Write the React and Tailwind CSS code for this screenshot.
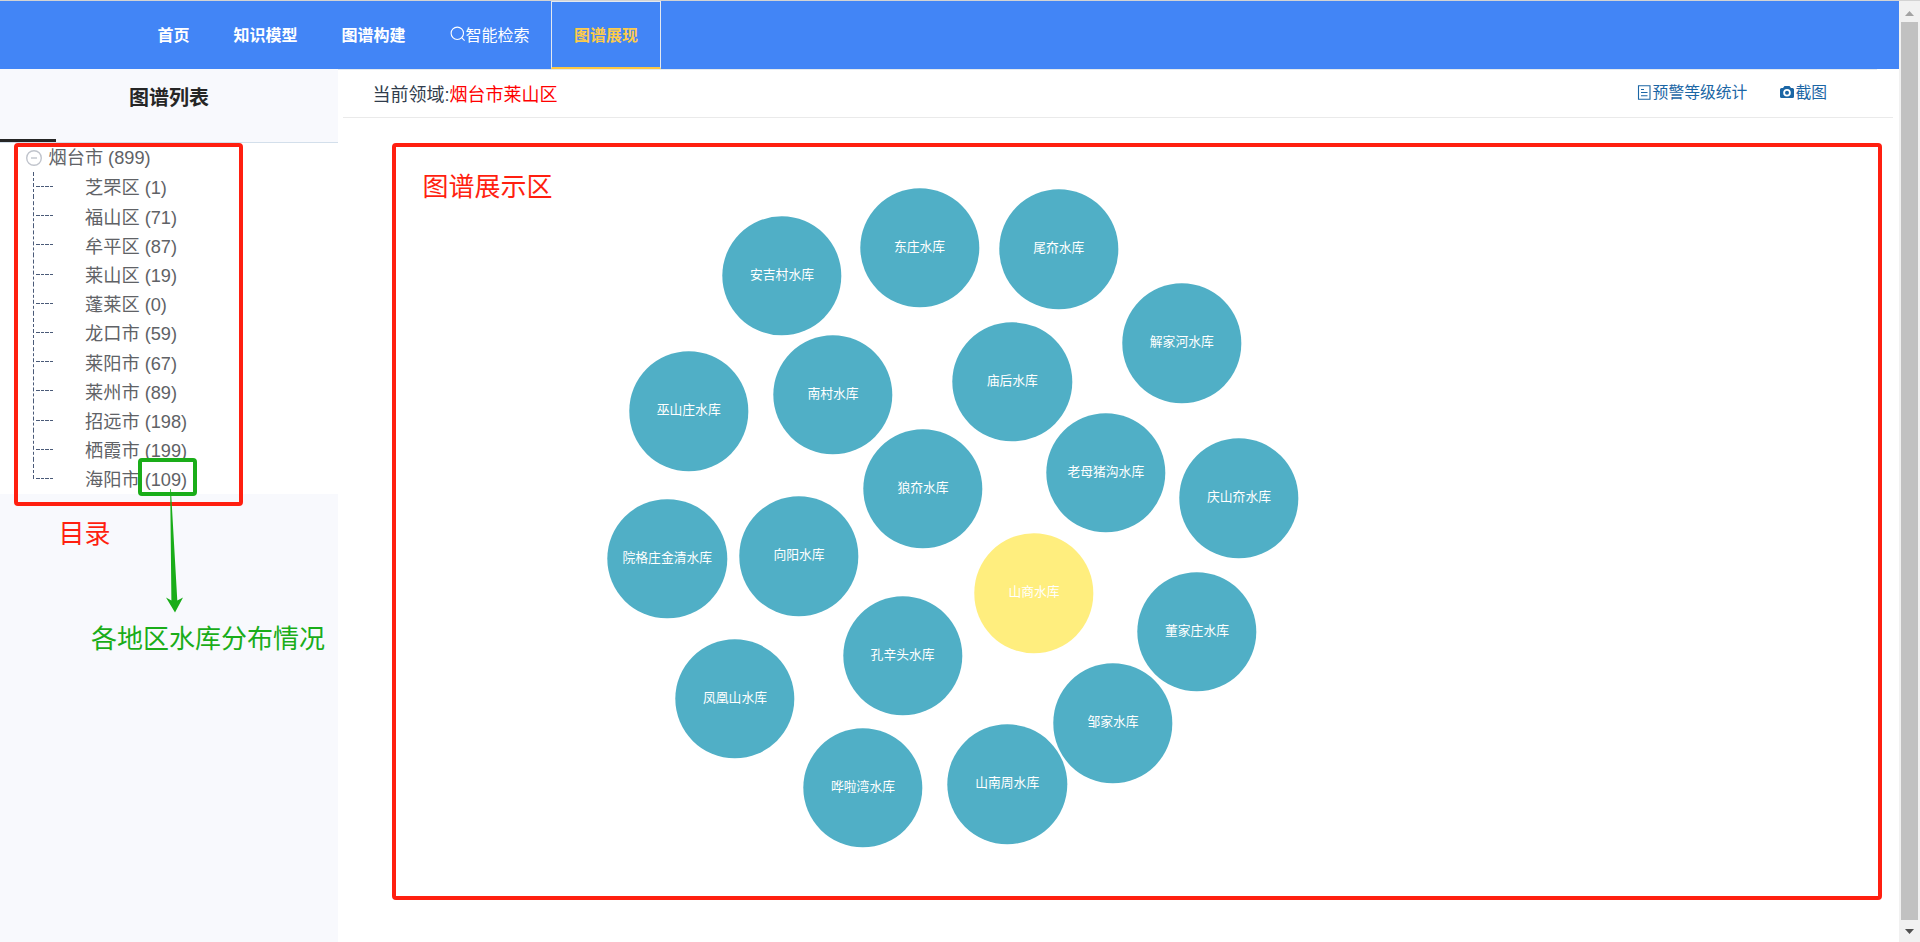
import React from "react";

const districts = [
  ["芝罘区", 1],
  ["福山区", 71],
  ["牟平区", 87],
  ["莱山区", 19],
  ["蓬莱区", 0],
  ["龙口市", 59],
  ["莱阳市", 67],
  ["莱州市", 89],
  ["招远市", 198],
  ["栖霞市", 199],
  ["海阳市", 109],
];

// [label, centre x, centre y] relative to the graph canvas
const nodes = [
  ["安吉村水库", 390, 133],
  ["东庄水库", 527.5, 105],
  ["尾夼水库", 666.8, 106.2],
  ["解家河水库", 789.8, 200.2],
  ["巫山庄水库", 296.7, 268.3],
  ["南村水库", 441, 252],
  ["庙后水库", 620.3, 239],
  ["老母猪沟水库", 713.8, 330],
  ["狼夼水库", 531, 346],
  ["庆山夼水库", 847, 355.3],
  ["院格庄金清水库", 275.3, 416],
  ["向阳水库", 407, 413.3],
  ["山商水库", 642, 450.3],
  ["董家庄水库", 805, 489],
  ["孔辛头水库", 510.6, 513],
  ["凤凰山水库", 343, 556],
  ["邹家水库", 721, 580.2],
  ["山南周水库", 615.2, 641.2],
  ["哗啦湾水库", 471, 644.7],
];

function NavItem({ children }) {
  return <a className="flex h-full items-center px-[22px] pt-px font-bold">{children}</a>;
}

function Header() {
  return (
    <header className="flex h-[69px] w-full border-t border-[#d3d3d3] bg-[#4285f6] pl-[135.5px] text-[16px] text-white">
      <NavItem>首页</NavItem>
      <NavItem>知识模型</NavItem>
      <NavItem>图谱构建</NavItem>
      <a className="flex h-full items-center pr-[21.5px] pl-[22px] pt-px">
        <svg className="-mt-[3px] size-4" viewBox="0 0 16 16" fill="none" stroke="currentColor" strokeWidth="1.1">
          <circle cx="7.3" cy="7.3" r="6.2" />
          <path d="M11.7 11.7 L14.6 14.6" />
        </svg>
        智能检索
      </a>
      <a className="flex h-full w-[110px] items-center justify-center border border-b-2 border-[#e3e8f0] border-b-[#fdc843] pt-[3px] font-bold text-[#fdcb4b]">
        图谱展现
      </a>
    </header>
  );
}

function Tree() {
  return (
    <div className="relative h-[351px] bg-white text-[18.2px] text-[#606266]">
      <div className="flex h-[31px] items-center pl-[26px]">
        <svg className="mr-[6.5px] -mt-[2px] size-4" viewBox="0 0 16 16" fill="none" stroke="#c0c4cc">
          <circle cx="8" cy="8" r="7.3" strokeWidth="1.4" />
          <path d="M5 8 H11" strokeWidth="1.4" />
        </svg>
        <span>烟台市 (899)</span>
      </div>
      <ul className="relative">
        <svg className="absolute -top-[2px] left-[33px] h-[308px] w-px" stroke="#4a5a78">
          <path d="M0.5 0 V308" strokeWidth="1" strokeDasharray="4 2 3 2 4 2 3 2 5 2.2" />
        </svg>
        {districts.map(([name, count]) => (
          <li key={name} className="flex h-[29.2px] items-center pl-[36px]">
            <span className="mr-[31.5px] flex h-[5px] w-[17.5px] gap-px">
              <i className="h-px w-[4px] bg-[#4a5a78]" />
              <i className="h-px w-[3px] bg-[#4a5a78]" />
              <i className="h-px w-[4px] bg-[#4a5a78]" />
              <i className="h-px w-[3px] bg-[#4a5a78]" />
            </span>
            <span className="pt-px">
              {name} ({count})
            </span>
          </li>
        ))}
      </ul>
      <div className="absolute top-0 left-[14px] h-[363px] w-[229px] rounded-[4px] border-4 border-[#ff1f10]" />
      <div className="absolute top-[315px] left-[138px] h-[38px] w-[59px] rounded-[4px] border-4 border-[#1aad19]" />
      <svg className="absolute top-[346px] left-[160px] h-[128px] w-[30px]" fill="#1aad19">
        <path d="M10.2 0 L10.9 0 L17.3 111.5 L23 108.5 L15 123.5 L6 108.5 L11.4 111.5 Z" />
      </svg>
    </div>
  );
}

function Sidebar() {
  return (
    <aside className="w-[338px] shrink-0 bg-[#f8f9fd]">
      <div className="flex h-[74px] flex-col justify-between border-b border-[#d3dfeb]">
        <h1 className="pt-[14px] text-center text-[20px] leading-[30px] font-bold text-[#262626]">图谱列表</h1>
        <div className="h-[3px] w-[56px] bg-[#262626]" />
      </div>
      <Tree />
      <p className="mt-[22px] pl-[58.5px] text-[26px] leading-9 text-[#ff1f10]">目录</p>
      <p className="mt-[69px] pl-[91px] text-[26px] leading-9 whitespace-nowrap text-[#1aad19]">各地区水库分布情况</p>
    </aside>
  );
}

function Toolbar() {
  return (
    <div className="flex h-[47px] items-start justify-between pr-[50px] pl-[29.5px]">
      <p className="pt-[13px] text-[18px] leading-6 text-[#303c4c]">
        当前领域:<span className="text-[#ff0000]">烟台市莱山区</span>
      </p>
      <div className="flex gap-[33px] pt-[11px] pr-[16px] text-[15.8px] leading-6 text-[#1b66a5]">
        <a className="flex items-center">
          <svg className="mr-px -mt-px size-[15px]" viewBox="0 0 15 15" fill="none" stroke="currentColor" strokeWidth="1.1">
            <path d="M1.5 0.8 H13 V14.2 H1.5 Z M4 4.5 H7 M4 7.5 H10.5 M4 10.8 H10.5" />
          </svg>
          预警等级统计
        </a>
        <a className="flex items-center">
          <svg className="mr-px -mt-px h-[15px] w-[14px]" viewBox="0 0 14 15" fill="currentColor">
            <path
              fillRule="evenodd"
              d="M1.5 3 H3 L4.5 1 H9.5 L11 3 H12.5 Q14 3 14 4.5 V11.5 Q14 13 12.5 13 H1.5 Q0 13 0 11.5 V4.5 Q0 3 1.5 3 Z M7 4 A3.8 3.8 0 1 0 7 11.6 A3.8 3.8 0 1 0 7 4 Z"
            />
            <circle cx="7" cy="7.8" r="2" />
          </svg>
          截图
        </a>
      </div>
    </div>
  );
}

function Graph() {
  return (
    <section className="relative mt-[25px] ml-[54px] h-[757px] w-[1490px] rounded-[4px] border-4 border-[#ff1f10]">
      <h2 className="pt-[22px] pl-[26.5px] text-[26px] leading-9 text-[#ff1f10]">图谱展示区</h2>
      {nodes.map(([label, x, y]) => (
        <div
          key={label}
          className={`absolute flex size-[119.4px] -translate-1/2 items-center justify-center rounded-full pb-[2px] text-[12.8px] whitespace-nowrap text-white ${
            label === "山商水库" ? "bg-[#ffee7e]" : "bg-[#50afc6]"
          }`}
          style={{ left: x - 4, top: y - 4 }}
        >
          {label}
        </div>
      ))}
    </section>
  );
}

function Scrollbar() {
  return (
    <div className="flex w-[21px] shrink-0 flex-col items-center border-t border-[#d3d3d3] bg-[#f1f1f1]">
      <div className="flex h-[21px] items-center pt-[3px]">
        <svg width="9" height="5" fill="#a3a3a3">
          <path d="M0 5 L4.5 0 L9 5 Z" />
        </svg>
      </div>
      <div className="w-[17px] flex-1 bg-[#c1c1c1]" />
      <div className="flex h-[22px] items-center">
        <svg width="9" height="5" fill="#505050">
          <path d="M0 0 L4.5 5 L9 0 Z" />
        </svg>
      </div>
    </div>
  );
}

export default function App() {
  return (
    <div className="flex h-[942px] w-[1920px] overflow-hidden bg-white font-['Liberation_Sans','Noto_Sans_CJK_SC',sans-serif]">
      <div className="flex w-[1899px] flex-col">
        <Header />
        <div className="flex flex-1">
          <Sidebar />
          <main className="flex-1">
            <div className="h-px w-[1539px] bg-[#e4e9ee]" />
            <div className="ml-[5px] w-[1550px] border-b border-[#eaeaea]">
              <Toolbar />
            </div>
            <Graph />
          </main>
        </div>
      </div>
      <Scrollbar />
    </div>
  );
}
